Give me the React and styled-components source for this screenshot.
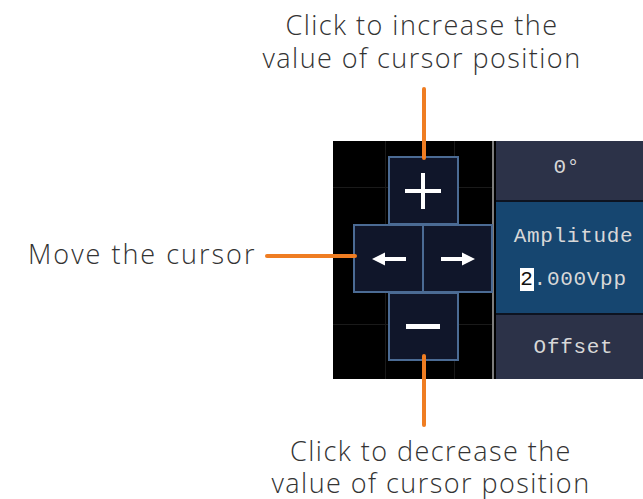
import React from "react";
import styled, { createGlobalStyle } from "styled-components";

const GlobalStyle = createGlobalStyle`
  html, body {
    margin: 0;
    padding: 0;
    background: #ffffff;
    overflow: hidden;
  }
  body {
    width: 643px;
    height: 499px;
    font-family: "Open Sans", "Noto Sans", sans-serif;
  }
`;

const Page = styled.div`
  width: 643px;
  height: 499px;
  padding-top: 8px;
  box-sizing: border-box;
  display: flex;
  flex-direction: column;
  overflow: hidden;
`;

const Caption = styled.div`
  width: 440px;
  margin-left: ${({ $center }) => $center - 220}px;
  margin-top: ${({ $top }) => $top || 0}px;
  text-align: center;
  font-size: 27px;
  font-weight: 300;
  letter-spacing: 1.45px;
  line-height: ${({ $lh }) => $lh}px;
  color: #333333;
  white-space: nowrap;
`;

const Row = styled.div`
  display: flex;
  align-items: flex-start;
  margin-top: 67px;
  height: 238px;
`;

const LabelArea = styled.div`
  width: 333px;
  flex-shrink: 0;
  padding: 98px 0 0 28px;
  box-sizing: border-box;
`;

const Label = styled.span`
  font-size: 27px;
  font-weight: 300;
  letter-spacing: 2px;
  line-height: 30px;
  color: #333333;
  white-space: nowrap;
`;

const Scope = styled.div`
  position: relative;
  display: flex;
  height: 238px;
  flex-shrink: 0;
`;

const Leader = styled.div`
  position: absolute;
  z-index: 2;
  background: #ef7d22;
  border-radius: 2px;
  left: ${({ $x }) => $x}px;
  top: ${({ $y }) => $y}px;
  width: ${({ $w }) => $w}px;
  height: ${({ $h }) => $h}px;
`;

const Screen = styled.div`
  width: 163px;
  height: 238px;
  box-sizing: border-box;
  border-right: 2px solid #000;
  background:
    linear-gradient(#7d7d7d, #7d7d7d) 159px 0 / 2px 100% no-repeat,
    linear-gradient(#1a1a1a, #1a1a1a) 0 46px / 100% 1px no-repeat,
    linear-gradient(#1a1a1a, #1a1a1a) 0 183px / 100% 1px no-repeat,
    linear-gradient(#1a1a1a, #1a1a1a) 52px 0 / 1px 100% no-repeat,
    linear-gradient(#1a1a1a, #1a1a1a) 121px 0 / 1px 100% no-repeat,
    #000;
`;

const Keypad = styled.div`
  width: 140px;
  margin-left: 20px;
  padding-top: 15px;
  display: flex;
  flex-direction: column;
  align-items: center;
`;

const KeyRow = styled.div`
  display: flex;
  margin-top: -1px;
`;

const Key = styled.div`
  width: 71px;
  height: 69px;
  box-sizing: border-box;
  border: 2px solid #4b6b94;
  background: #10162a;
  display: flex;
  align-items: center;
  justify-content: center;
  margin-top: ${({ $mt }) => $mt || 0}px;
  & + & {
    margin-left: -2px;
  }
`;

const Menu = styled.div`
  width: 155px;
  height: 238px;
  flex-shrink: 0;
  display: flex;
  flex-direction: column;
  gap: 2px;
  background: #0d1320;
  font-family: "Liberation Mono", "DejaVu Sans Mono", monospace;
  font-size: 21px;
  letter-spacing: 0.7px;
  color: #d8d8d8;
`;

const MenuItem = styled.div`
  height: ${({ $h }) => ($h ? `${$h}px` : "auto")};
  flex: ${({ $h }) => ($h ? "none" : 1)};
  background: ${({ $active }) => ($active ? "#164670" : "#2c3248")};
  display: flex;
  flex-direction: column;
  align-items: center;
  justify-content: center;
  gap: 18px;
  padding-bottom: ${({ $pb }) => $pb || 0}px;
  box-sizing: border-box;
  line-height: 25px;
`;

const Digit = styled.span`
  background: #ffffff;
  color: #111;
`;

const PlusIcon = () => (
  <svg width="36" height="36" viewBox="0 0 36 36">
    <rect x="0" y="16" width="36" height="4" fill="#fff" />
    <rect x="16" y="0" width="4" height="36" fill="#fff" />
  </svg>
);

const MinusIcon = () => (
  <svg width="34" height="5" viewBox="0 0 34 5">
    <rect x="0" y="0" width="34" height="5" fill="#fff" />
  </svg>
);

const ArrowIcon = ({ dir }) => (
  <svg
    width="34"
    height="14"
    viewBox="0 0 34 14"
    style={{ transform: dir === "right" ? "scaleX(-1)" : "none" }}
  >
    <rect x="10" y="5" width="24" height="4" fill="#fff" />
    <polygon points="0,7 13,0.5 13,13.5" fill="#fff" />
  </svg>
);

const App = () => {
  return (
    <>
      <GlobalStyle />
      <Page>
        <Caption $center={422} $lh={33}>
          Click to increase the
          <br />
          value of cursor position
        </Caption>

        <Row>
          <LabelArea>
            <Label>Move the cursor</Label>
          </LabelArea>

          <Scope>
            <Leader $x={89} $y={-54} $w={4} $h={73} />
            <Leader $x={-68} $y={113} $w={92} $h={4} />
            <Leader $x={89} $y={213} $w={4} $h={73} />

            <Screen>
              <Keypad>
                <Key>
                  <PlusIcon />
                </Key>
                <KeyRow>
                  <Key>
                    <ArrowIcon dir="left" />
                  </Key>
                  <Key>
                    <ArrowIcon dir="right" />
                  </Key>
                </KeyRow>
                <Key $mt={-1}>
                  <MinusIcon />
                </Key>
              </Keypad>
            </Screen>

            <Menu>
              <MenuItem $h={59} $pb={6}>0°&nbsp;</MenuItem>
              <MenuItem $h={111} $active>
                <span>Amplitude</span>
                <span>
                  <Digit>2</Digit>.000Vpp
                </span>
              </MenuItem>
              <MenuItem>Offset</MenuItem>
            </Menu>
          </Scope>
        </Row>

        <Caption $center={431} $top={56} $lh={32}>
          Click to decrease the
          <br />
          value of cursor position
        </Caption>
      </Page>
    </>
  );
};

export default App;
